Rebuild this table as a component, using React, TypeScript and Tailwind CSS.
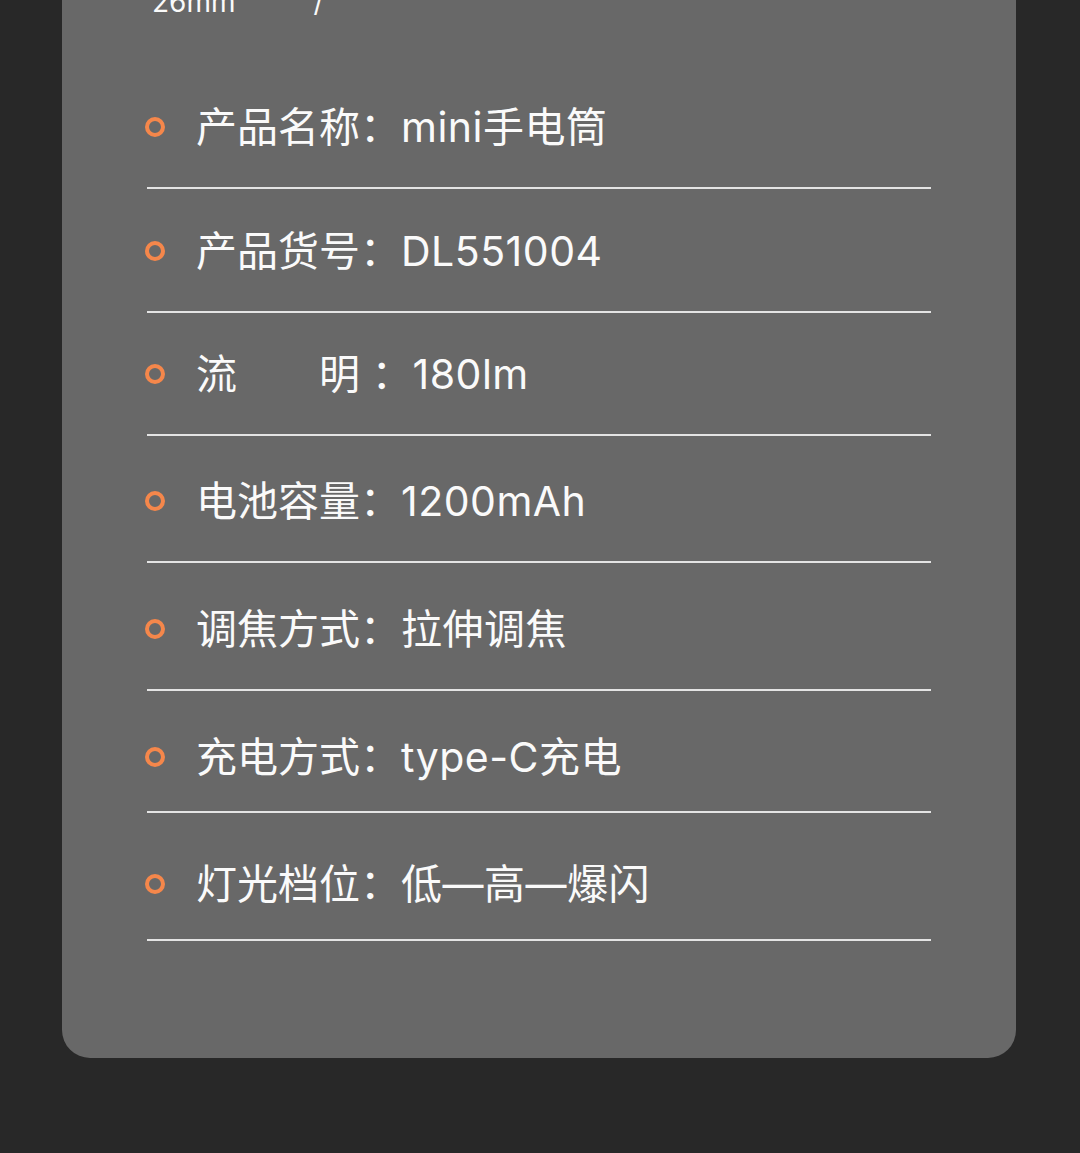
const rows = [
  { label: "产品名称：", value: "mini手电筒", pt: "pt-0", pb: "pb-[36px]" },
  { label: "产品货号：", value: "DL551004", pt: "pt-[38px]", pb: "pb-[36px]" },
  { label: "流　　明 ：", value: "180lm", pt: "pt-[37px]", pb: "pb-[36px]" },
  { label: "电池容量：", value: "1200mAh", pt: "pt-[41px]", pb: "pb-[36px]" },
  { label: "调焦方式：", value: "拉伸调焦", pt: "pt-[42px]", pb: "pb-[36px]" },
  { label: "充电方式：", value: "type-C充电", pt: "pt-[42px]", pb: "pb-[30px]" },
  { label: "灯光档位：", value: "低—高—爆闪", pt: "pt-[47px]", pb: "pb-[31px]" },
];

const SpecRow = ({ label, value, pt, pb }: (typeof rows)[number]) => {
  return (
    <div className={`${pt} ${pb} border-b-2 border-[#e4e4e4]`}>
      <div className="flex items-center gap-[31px] -ml-[2px]">
        <span className="w-[20px] h-[20px] shrink-0 rounded-full border-4 border-[#f5874b]" />
        <span className="text-[41px] leading-[48px] text-[#fafafa] whitespace-pre">
          {label}
          <span className="tracking-[0.5px]">{value}</span>
        </span>
      </div>
    </div>
  );
};

export default function App() {
  return (
    <div
      className="h-[1153px] overflow-hidden bg-[#282828] pl-[62px] pr-[64px]"
      style={{ fontFamily: 'Inter, "Noto Sans CJK SC", sans-serif' }}
    >
      <div className="flow-root bg-[#686868] rounded-b-[28px] px-[85px] pb-[117px]">
        <div className="h-[103px] flex flex-col">
          <div className="-mt-[13px] ml-[5px] flex gap-[78px] text-[28px] leading-[30px] text-[#fafafa]">
            <span>26mm</span>
            <span>/</span>
          </div>
        </div>
        {rows.map((row) => (
          <SpecRow key={row.label} {...row} />
        ))}
      </div>
    </div>
  );
}
